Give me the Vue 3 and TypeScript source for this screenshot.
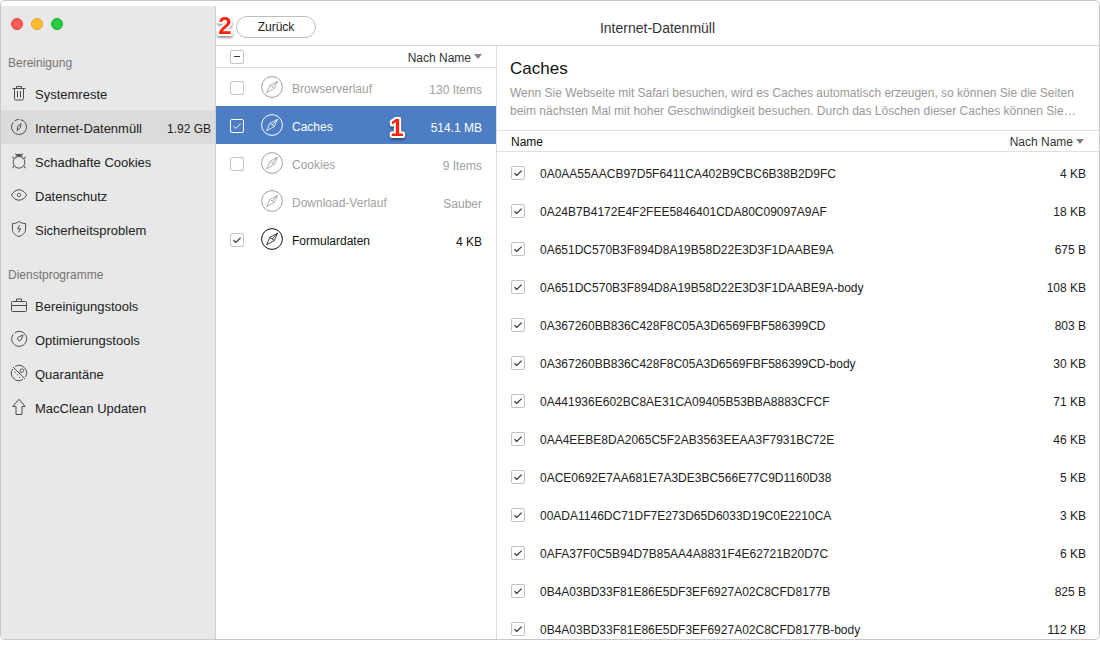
<script setup lang="ts">
import { ref } from 'vue'

interface NavItem {
  label: string
  icon: string[]
  size?: string
}

interface NavSection {
  title: string
  items: NavItem[]
}

interface Category {
  name: string
  size: string
  state: 'off' | 'on' | 'none'
  dim: boolean
}

interface CacheFile {
  name: string
  size: string
  checked: boolean
}

const sections: NavSection[] = [
  {
    title: 'Bereinigung',
    items: [
      {
        label: 'Systemreste',
        icon: ['M2.5 4.5h13M6.5 4.5v-2h5v2M4.5 4.5v10a1.5 1.5 0 0 0 1.5 1.5h6a1.5 1.5 0 0 0 1.5-1.5v-10M7.5 7v6.5M10.5 7v6.5'],
      },
      {
        label: 'Internet-Datenmüll',
        size: '1.92 GB',
        icon: [
          'M10.5 1.65A7.5 7.5 0 1 1 3.2 4.3M4.6 2.9A7.5 7.5 0 0 1 9 1.5',
          'M11 5.5L10.4 9.6L7.2 12.6L7.8 8.4Z',
        ],
      },
      {
        label: 'Schadhafte Cookies',
        icon: [
          'M9 4.5a5.8 5.8 0 1 0 .01 0zM5.4 5.6C5.8 3.9 7 3.5 9 3.5s3.2.4 3.6 2.1M6.6 3.7L5.4 1.5M11.4 3.7L12.6 1.5M6.2 2.5h5.6',
          'M4.4 6.6L2.8 6V4.6M13.6 6.6L15.2 6V4.6M4.4 14.3l-1.4.6v1.4M13.6 14.3l1.4.6v1.4',
        ],
      },
      {
        label: 'Datenschutz',
        icon: ['M1.3 9C3.6 5.4 6.2 3.8 9 3.8S14.4 5.4 16.7 9C14.4 12.6 11.8 14.2 9 14.2S3.6 12.6 1.3 9z', 'M9 7.3a1.7 1.7 0 1 0 .01 0z'],
      },
      {
        label: 'Sicherheitsproblem',
        icon: ['M9 1.5C7 3 4.8 3.5 2.4 3.6V9c0 3.8 2.8 6.2 6.6 7.5 3.8-1.3 6.6-3.7 6.6-7.5V3.6C13.2 3.5 11 3 9 1.5z', 'M9.8 5.2L7.6 8.8h3L8.4 12.4'],
      },
    ],
  },
  {
    title: 'Dienstprogramme',
    items: [
      {
        label: 'Bereinigungstools',
        icon: ['M2.5 5.5h13a1 1 0 0 1 1 1v8a1 1 0 0 1-1 1h-13a1 1 0 0 1-1-1v-8a1 1 0 0 1 1-1zM6.5 5.5v-2.5h5v2.5M1.5 9.5h15'],
      },
      {
        label: 'Optimierungstools',
        icon: ['M4.6 2.9A7.5 7.5 0 1 1 3.2 4.3', 'M13 5L11.2 9.8a2 2 0 1 1-3-2.6z'],
      },
      {
        label: 'Quarantäne',
        icon: [
          'M5.2 2.5A7.5 7.5 0 0 1 15.4 12.9M13 15.4A7.5 7.5 0 0 1 2.6 5.1M3 3L15 15',
          'M11.8 4.8a1.8 1.8 0 1 0 .01 0M10.6 7.8l-1 1M4.6 8.5h1M7.4 10.2v1M9 13.5h1',
        ],
      },
      {
        label: 'MacClean Updaten',
        icon: ['M9 1.2L15.2 8.5H12v8H6v-8H2.8z'],
      },
    ],
  },
]

const activeItem = ref('Internet-Datenmüll')
const activeCategory = ref('Caches')

const categories = ref<Category[]>([
  { name: 'Browserverlauf', size: '130 Items', state: 'off', dim: true },
  { name: 'Caches', size: '514.1 MB', state: 'on', dim: false },
  { name: 'Cookies', size: '9 Items', state: 'off', dim: true },
  { name: 'Download-Verlauf', size: 'Sauber', state: 'none', dim: true },
  { name: 'Formulardaten', size: '4 KB', state: 'on', dim: false },
])

const files = ref<CacheFile[]>([
  { name: '0A0AA55AACB97D5F6411CA402B9CBC6B38B2D9FC', size: '4 KB', checked: true },
  { name: '0A24B7B4172E4F2FEE5846401CDA80C09097A9AF', size: '18 KB', checked: true },
  { name: '0A651DC570B3F894D8A19B58D22E3D3F1DAABE9A', size: '675 B', checked: true },
  { name: '0A651DC570B3F894D8A19B58D22E3D3F1DAABE9A-body', size: '108 KB', checked: true },
  { name: '0A367260BB836C428F8C05A3D6569FBF586399CD', size: '803 B', checked: true },
  { name: '0A367260BB836C428F8C05A3D6569FBF586399CD-body', size: '30 KB', checked: true },
  { name: '0A441936E602BC8AE31CA09405B53BBA8883CFCF', size: '71 KB', checked: true },
  { name: '0AA4EEBE8DA2065C5F2AB3563EEAA3F7931BC72E', size: '46 KB', checked: true },
  { name: '0ACE0692E7AA681E7A3DE3BC566E77C9D1160D38', size: '5 KB', checked: true },
  { name: '00ADA1146DC71DF7E273D65D6033D19C0E2210CA', size: '3 KB', checked: true },
  { name: '0AFA37F0C5B94D7B85AA4A8831F4E62721B20D7C', size: '6 KB', checked: true },
  { name: '0B4A03BD33F81E86E5DF3EF6927A02C8CFD8177B', size: '825 B', checked: true },
  { name: '0B4A03BD33F81E86E5DF3EF6927A02C8CFD8177B-body', size: '112 KB', checked: true },
])

function toggle(category: Category, event: Event) {
  category.state = (event.target as HTMLInputElement).checked ? 'on' : 'off'
}
</script>

<template>
  <div class="window">
    <nav class="sidebar" aria-label="Navigation">
      <div class="lights">
        <button class="light close" type="button" aria-label="Schließen"></button>
        <button class="light minimize" type="button" aria-label="Minimieren"></button>
        <button class="light maximize" type="button" aria-label="Maximieren"></button>
      </div>
      <section v-for="section in sections" :key="section.title" class="group">
        <h2>{{ section.title }}</h2>
        <a
          v-for="item in section.items"
          :key="item.label"
          href="#"
          class="nav-item"
          :class="{ active: item.label === activeItem }"
          @click.prevent="activeItem = item.label"
        >
          <svg class="nav-icon" viewBox="0 0 18 18" aria-hidden="true">
            <path v-for="d in item.icon" :key="d" :d="d" />
          </svg>
          <span class="nav-label">{{ item.label }}</span>
          <span v-if="item.size" class="nav-size">{{ item.size }}</span>
        </a>
      </section>
    </nav>

    <main class="main">
      <header class="toolbar">
        <button class="back" type="button">Zurück</button>
        <svg class="marker marker-back" viewBox="0 0 24 30" aria-hidden="true"><text x="12" y="24">2</text></svg>
        <h1>Internet-Datenmüll</h1>
      </header>

      <div class="panes">
        <section class="categories" aria-label="Kategorien">
          <div class="list-head">
            <input class="check partial" type="checkbox" aria-label="Alle auswählen" />
            <button class="sort" type="button">Nach Name<i class="caret"></i></button>
          </div>
          <ul>
            <li
              v-for="category in categories"
              :key="category.name"
              class="category"
              :class="{ dim: category.dim, selected: category.name === activeCategory }"
              @click="activeCategory = category.name"
            >
              <span class="check-slot">
                <input
                  v-if="category.state !== 'none'"
                  :id="'cat-' + category.name"
                  class="check"
                  type="checkbox"
                  :checked="category.state === 'on'"
                  @change="toggle(category, $event)"
                />
              </span>
              <svg class="compass" viewBox="0 0 22 22" aria-hidden="true">
                <circle cx="11" cy="11" r="10.4" />
                <path d="M16.6 5.2L13.4 12.4L5.6 16.8L8.8 9.4ZM8.8 9.4L13.4 12.4M16.6 5.2L11 11" />
              </svg>
              <label class="category-name" :for="'cat-' + category.name">{{ category.name }}</label>
              <svg v-if="category.name === 'Caches'" class="marker marker-row" viewBox="0 0 24 30" aria-hidden="true">
                <text x="12" y="24">1</text>
              </svg>
              <span class="category-size">{{ category.size }}</span>
            </li>
          </ul>
        </section>

        <section class="details" aria-label="Caches">
          <div class="intro">
            <h2>Caches</h2>
            <p>
              Wenn Sie Webseite mit Safari besuchen, wird es Caches automatisch erzeugen, so können Sie die Seiten
              <br />beim nächsten Mal mit hoher Geschwindigkeit besuchen. Durch das Löschen dieser Caches können Sie…
            </p>
          </div>
          <table>
            <thead>
              <tr>
                <th class="name-head" colspan="2" scope="col">Name</th>
                <th class="size-head" scope="col">
                  <button class="sort" type="button">Nach Name<i class="caret"></i></button>
                </th>
              </tr>
            </thead>
            <tbody>
              <tr v-for="(file, index) in files" :key="file.name">
                <td class="file-check">
                  <input :id="'file-' + index" v-model="file.checked" class="check" type="checkbox" />
                </td>
                <td class="file-name"><label :for="'file-' + index">{{ file.name }}</label></td>
                <td class="file-size">{{ file.size }}</td>
              </tr>
            </tbody>
          </table>
        </section>
      </div>
    </main>
  </div>
</template>

<style>
body {
  margin: 0;
  background: #fff;
}
</style>

<style scoped>
.window {
  box-sizing: border-box;
  display: flex;
  height: calc(100vh - 6px);
  padding-top: 5px;
  border: 1px solid #c8c8c8;
  border-radius: 5px;
  overflow: hidden;
  background: #fff;
  color: #222;
  font: 12px/18px "Liberation Sans", Arial, sans-serif;
}

h1,
h2,
p,
ul {
  margin: 0;
  padding: 0;
  font-weight: normal;
}

button {
  padding: 0;
  color: inherit;
  font: inherit;
}

.sidebar {
  box-sizing: border-box;
  flex: none;
  width: 215px;
  border-right: 1px solid #cfcfcf;
  background: #e8e8e8;
}

.lights {
  display: flex;
  gap: 8px;
  padding: 12px 10px 18px;
}

.light {
  box-sizing: border-box;
  width: 12px;
  height: 12px;
  border: 1px solid;
  border-radius: 50%;
}

.close {
  border-color: #e2463f;
  background: #fc5b57;
}

.minimize {
  border-color: #e1a325;
  background: #fdbc2e;
}

.maximize {
  border-color: #1fad30;
  background: #28ca40;
}

.group + .group {
  margin-top: 14px;
}

.group h2 {
  padding: 2px 0 0 7px;
  color: #737373;
  font-size: 12px;
  line-height: 26px;
}

.nav-item {
  display: flex;
  align-items: center;
  height: 34px;
  padding: 0 4px 0 9px;
  color: #222;
  text-decoration: none;
}

.nav-item.active {
  background: #dbdbdb;
}

.nav-icon {
  width: 18px;
  height: 18px;
  margin-right: 7px;
  fill: none;
  stroke: #4c4c4c;
  stroke-width: 1;
}

.nav-label {
  flex: 1;
  padding-top: 4px;
  font-size: 13px;
}

.nav-size {
  padding-top: 4px;
}

.main {
  display: flex;
  flex: 1;
  flex-direction: column;
  min-width: 0;
}

.toolbar {
  position: relative;
  display: flex;
  align-items: center;
  height: 36px;
  padding: 3px 20px 0;
  border-bottom: 1px solid #d6d6d6;
}

.toolbar h1 {
  flex: 1;
  padding: 2px 80px 0 0;
  color: #333;
  font-size: 14px;
  text-align: center;
}

.back {
  box-sizing: border-box;
  width: 80px;
  height: 22px;
  border: 1px solid #bdbdbd;
  border-radius: 11px;
  background: #fff;
  line-height: 20px;
}

.marker {
  position: absolute;
  width: 24px;
  height: 30px;
  overflow: visible;
  filter: drop-shadow(0 2px 1px rgba(0, 0, 0, 0.4));
}

.marker text {
  fill: #fb2408;
  stroke: #fff;
  stroke-width: 4px;
  stroke-linejoin: round;
  paint-order: stroke;
  font-size: 24px;
  font-weight: bold;
  text-anchor: middle;
}

.marker-back {
  top: 4px;
  left: -3px;
}

.marker-row {
  top: 6px;
  right: 87px;
}

.panes {
  display: flex;
  flex: 1;
  min-height: 0;
}

.categories {
  flex: none;
  width: 280px;
  border-right: 1px solid #dcdcdc;
}

.list-head {
  display: flex;
  align-items: center;
  justify-content: space-between;
  height: 21px;
  padding: 0 14px;
  border-bottom: 1px solid #e0e0e0;
}

.sort {
  display: inline-flex;
  align-items: center;
  gap: 3px;
  padding-top: 2px;
  border: 0;
  background: none;
  color: #333;
  line-height: 18px;
}

.caret {
  margin-bottom: 2px;
  border: 4px solid transparent;
  border-top: 5px solid #808080;
  border-bottom: 0;
}

.check {
  box-sizing: border-box;
  display: block;
  flex: none;
  width: 14px;
  height: 14px;
  margin: 0;
  border: 1px solid #c2c2c2;
  border-radius: 2px;
  appearance: none;
  background: transparent center / 12px 12px no-repeat;
}

.check:checked {
  background-image: url("data:image/svg+xml,%3Csvg xmlns='http://www.w3.org/2000/svg' viewBox='0 0 12 12'%3E%3Cpath d='M2.5 6.2L4.8 8.4L9.6 3.6' fill='none' stroke='%23333' stroke-width='1.2'/%3E%3C/svg%3E");
}

.partial {
  background-image: linear-gradient(#333, #333);
  background-size: 6px 1px;
}

.selected .check {
  border-color: #fff;
}

.selected .check:checked {
  background-image: url("data:image/svg+xml,%3Csvg xmlns='http://www.w3.org/2000/svg' viewBox='0 0 12 12'%3E%3Cpath d='M2.5 6.2L4.8 8.4L9.6 3.6' fill='none' stroke='%23fff' stroke-width='1'/%3E%3C/svg%3E");
}

.categories ul {
  list-style: none;
}

.category {
  position: relative;
  display: flex;
  align-items: center;
  height: 38px;
  padding: 0 14px;
  color: #111;
}

.category.dim {
  color: #a0a0a0;
}

.category.selected {
  background: #4d7dc3;
  color: #fff;
}

.check-slot {
  width: 31px;
  padding-top: 2px;
}

.compass {
  width: 22px;
  height: 22px;
  margin-right: 9px;
  fill: none;
  stroke: currentColor;
  stroke-width: 1;
}

.compass path {
  stroke-width: 0.8;
}

.category-name {
  flex: 1;
  padding-top: 4px;
}

.category-size {
  padding-top: 6px;
}

.details {
  flex: 1;
  min-width: 0;
}

.intro {
  padding: 12px 13px 10px;
}

.intro h2 {
  color: #111;
  font-size: 17px;
  line-height: 22px;
}

.intro p {
  padding-top: 4px;
  color: #999;
  white-space: nowrap;
}

table {
  width: 100%;
  border-spacing: 0;
}

th,
td {
  box-sizing: border-box;
  padding: 0;
  font-weight: normal;
  text-align: left;
}

th {
  height: 22px;
  border-top: 1px solid #e0e0e0;
  border-bottom: 1px solid #e0e0e0;
  color: #111;
}

.name-head {
  padding: 2px 0 0 14px;
  line-height: 18px;
}

.size-head {
  padding-right: 15px;
}

.size-head .sort {
  display: flex;
  margin-left: auto;
}

td {
  height: 38px;
}

tbody::before {
  display: block;
  height: 2px;
  content: "";
}

.file-check {
  width: 43px;
  padding-left: 14px;
}

.file-name,
.file-size {
  padding-top: 2px;
}

.file-size {
  padding-right: 13px;
  text-align: right;
}
</style>
